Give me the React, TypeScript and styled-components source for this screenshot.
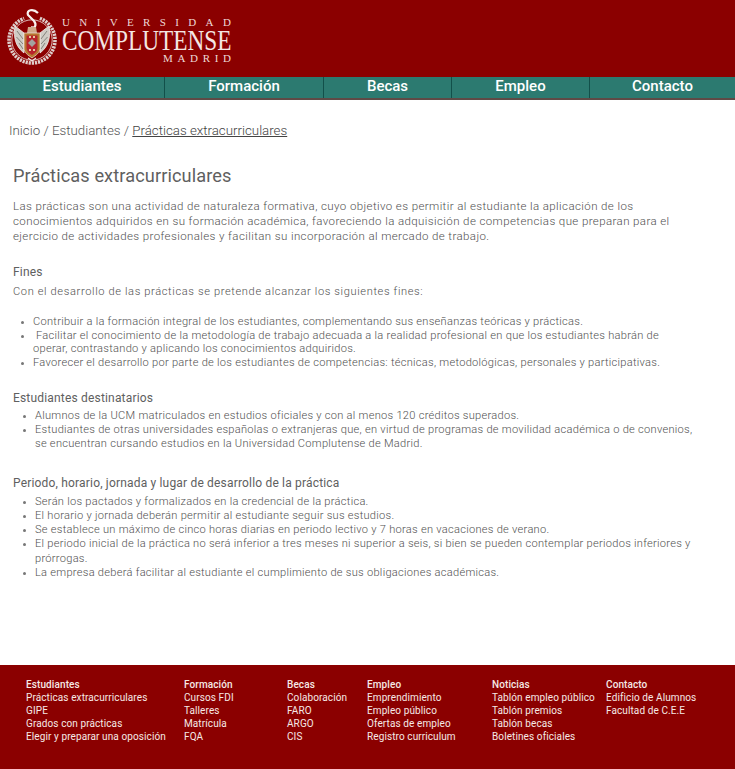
import * as React from 'react';
import styled, {createGlobalStyle} from 'styled-components';

const GlobalStyle = createGlobalStyle`
  html, body {
    margin: 0;
    padding: 0;
    background: #fff;
    font-family: Roboto, "Liberation Sans", sans-serif;
  }
`;

const Page = styled.div`
  width: 735px;
  height: 769px;
  overflow: hidden;
  display: flex;
  flex-direction: column;
`;

const Header = styled.header`
  height: 77px;
  background: #8b0000;
  display: flex;
  align-items: flex-start;
  padding: 8px 0 0 6px;
  box-sizing: border-box;
  gap: 5px;
`;

const Wordmark = styled.div`
  display: flex;
  flex-direction: column;
  font-family: "Liberation Serif", serif;
  color: #eed9d6;
  width: 169px;
  margin-left: -1px;
`;

const WordSmall = styled.div`
  display: flex;
  justify-content: space-between;
  font-size: 11px;
  line-height: 12px;
  margin-top: 8px;
`;

const WordBig = styled.div`
  font-size: 29px;
  line-height: 24px;
  white-space: nowrap;
  color: #f4e6e3;
  transform: scaleX(0.803);
  transform-origin: left center;
`;

const WordTail = styled(WordSmall)`
  margin: 0 0 0 101px;
`;

const Nav = styled.nav`
  height: 21px;
  background: #2c7a70;
  border-bottom: 2px solid #5f4a46;
  display: flex;
`;

const NavItem = styled.a<{$w: number}>`
  width: ${p => p.$w}px;
  box-sizing: border-box;
  border-right: 1px solid #12504a;
  color: #fff;
  font-size: 15px;
  font-weight: 500;
  line-height: 19px;
  text-align: center;
  &:last-child { border-right: 0; }
`;

const Crumbs = styled.div`
  margin-top: 22px;
  padding-left: 9px;
  font-size: 13.3px;
  line-height: 18px;
  font-weight: 300;
  color: #555;
  u { color: #444; }
`;

const Main = styled.main`
  flex: 1;
  padding: 0 13px;
  color: #505050;
  font-size: 11.1px;
  font-weight: 300;
`;

const Title = styled.h1`
  margin: 24px 0 0;
  font-size: 18.2px;
  line-height: 24px;
  font-weight: 400;
  letter-spacing: 0.1px;
  color: #5f5f5f;
`;

const Para = styled.p`
  margin: 11px 0 0;
  font-size: 11.5px;
  line-height: 15px;
  letter-spacing: 0.4px;
  width: 668px;
`;

const Heading = styled.h2<{$top: number}>`
  margin: ${p => p.$top}px 0 0;
  font-size: 12px;
  line-height: 16px;
  font-weight: 400;
  letter-spacing: 0.18px;
  color: #606060;
`;

const Lead = styled.p`
  margin: 4px 0 0;
  line-height: 16px;
  letter-spacing: 0.63px;
`;

const List = styled.ul<{$top: number; $line: number; $indent: number; $width: number}>`
  margin: ${p => p.$top}px 0 0;
  padding: 0 0 0 ${p => p.$indent}px;
  width: ${p => p.$width}px;
  box-sizing: border-box;
  line-height: ${p => p.$line}px;
  letter-spacing: 0.27px;
  li::marker { color: #777; font-size: 9px; }
`;

const Footer = styled.footer`
  height: 104px;
  background: #8b0000;
  padding: 13px 0 0 26px;
  box-sizing: border-box;
  display: flex;
  color: #f6e9e6;
  font-size: 10px;
  line-height: 13px;
  letter-spacing: 0.1px;
`;

const FootCol = styled.div<{$w: number}>`
  width: ${p => p.$w}px;
  display: flex;
  flex-direction: column;
  white-space: nowrap;
  b { font-weight: 500; }
`;

const Crest = () => (
  <svg width="52" height="60" viewBox="0 0 52 60" aria-hidden="true">
    <path d="M33.9 10.4 A23 23 0 1 1 18.1 10.4" fill="none" stroke="#dfcfcc" strokeWidth="3.6" strokeDasharray="2.2 0.9" />
    <circle cx="26" cy="32" r="20.2" fill="#8b0000" stroke="#f1e4e1" strokeWidth="0.8" />
    <g transform="translate(1 1)">
      <path d="M17 24 L8 17 C6 29 9 38 17 44 Z" fill="#cfccc5" stroke="#f4ecea" strokeWidth="0.8" />
      <path d="M33 24 L42 17 C44 29 41 38 33 44 Z" fill="#cfccc5" stroke="#f4ecea" strokeWidth="0.8" />
      <path d="M10 22 L16 30 M9.5 28 L16 35 M12 34 L16 40 M40 22 L34 30 M40.5 28 L34 35 M38 34 L34 40" stroke="#7d7b75" strokeWidth="0.9" />
      <path d="M31 4 C26 -1 19 1 21 6 L27 12 C30 16 28 20 24 18" fill="none" stroke="#f8f1ef" strokeWidth="2.2" />
      <path d="M21 18 H29 L30 24 H20 Z" fill="#d0a98a" />
      <path d="M17 24 H33 V39 C33 44 29 46 25 49 C21 46 17 44 17 39 Z" fill="#b7762f" stroke="#efe2dc" strokeWidth="0.7" />
      <path d="M19.5 26.5 H30.5 V39 C30.5 42 28 44 25 46 C22 44 19.5 42 19.5 39 Z" fill="#b8222b" />
      <path d="M25 30 L29 34 L25 38 L21 34 Z" fill="#a3a3a0" />
      <path d="M22 27 h2 v2 h-2 Z M26 27 h2 v2 h-2 Z M22 40 h2 v2 h-2 Z M26 40 h2 v2 h-2 Z" fill="#e9c9a2" />
      <path d="M21 49 L25 52 L29 49" fill="none" stroke="#f1e4e1" strokeWidth="1.2" />
    </g>
  </svg>
);

const navItems: [string, number][] = [
  ['Estudiantes', 165], ['Formación', 159], ['Becas', 128], ['Empleo', 138], ['Contacto', 145],
];

const footer: {title: string; w: number; links: string[]}[] = [
  {title: 'Estudiantes', w: 158, links: ['Prácticas extracurriculares', 'GIPE', 'Grados con prácticas', 'Elegir y preparar una oposición']},
  {title: 'Formación', w: 103, links: ['Cursos FDI', 'Talleres', 'Matrícula', 'FQA']},
  {title: 'Becas', w: 80, links: ['Colaboración', 'FARO', 'ARGO', 'CIS']},
  {title: 'Empleo', w: 125, links: ['Emprendimiento', 'Empleo público', 'Ofertas de empleo', 'Registro curriculum']},
  {title: 'Noticias', w: 114, links: ['Tablón empleo público', 'Tablón premios', 'Tablón becas', 'Boletines oficiales']},
  {title: 'Contacto', w: 100, links: ['Edificio de Alumnos', 'Facultad de C.E.E']},
];

export default function App() {
  return (
    <Page>
      <GlobalStyle />
      <Header>
        <Crest />
        <Wordmark>
          <WordSmall>{'UNIVERSIDAD'.split('').map((c, i) => <span key={i}>{c}</span>)}</WordSmall>
          <WordBig>COMPLUTENSE</WordBig>
          <WordTail>{'MADRID'.split('').map((c, i) => <span key={i}>{c}</span>)}</WordTail>
        </Wordmark>
      </Header>
      <Nav>
        {navItems.map(([label, w]) => <NavItem key={label} $w={w}>{label}</NavItem>)}
      </Nav>
      <Crumbs>Inicio / Estudiantes / <u>Prácticas extracurriculares</u></Crumbs>
      <Main>
        <Title>Prácticas extracurriculares</Title>
        <Para>
          Las prácticas son una actividad de naturaleza formativa, cuyo objetivo es permitir al estudiante la aplicación de los conocimientos adquiridos en su formación académica, favoreciendo la adquisición de competencias que preparan para el ejercicio de actividades profesionales y facilitan su incorporación al mercado de trabajo.
        </Para>
        <Heading $top={20}>Fines</Heading>
        <Lead>Con el desarrollo de las prácticas se pretende alcanzar los siguientes fines:</Lead>
        <List $top={15} $line={13.7} $indent={20} $width={665}>
          <li>Contribuir a la formación integral de los estudiantes, complementando sus enseñanzas teóricas y prácticas.</li>
          <li>&nbsp;Facilitar el conocimiento de la metodología de trabajo adecuada a la realidad profesional en que los estudiantes habrán de operar, contrastando y aplicando los conocimientos adquiridos.</li>
          <li>Favorecer el desarrollo por parte de los estudiantes de competencias: técnicas, metodológicas, personales y participativas.</li>
        </List>
        <Heading $top={20}>Estudiantes destinatarios</Heading>
        <List $top={3} $line={14} $indent={22} $width={687}>
          <li>Alumnos de la UCM matriculados en estudios oficiales y con al menos 120 créditos superados.</li>
          <li>Estudiantes de otras universidades españolas o extranjeras que, en virtud de programas de movilidad académica o de convenios, se encuentran cursando estudios en la Universidad Complutense de Madrid.</li>
        </List>
        <Heading $top={24}>Periodo, horario, jornada y lugar de desarrollo de la práctica</Heading>
        <List $top={4} $line={14.2} $indent={22} $width={690}>
          <li>Serán los pactados y formalizados en la credencial de la práctica.</li>
          <li>El horario y jornada deberán permitir al estudiante seguir sus estudios.</li>
          <li>Se establece un máximo de cinco horas diarias en periodo lectivo y 7 horas en vacaciones de verano.</li>
          <li>El periodo inicial de la práctica no será inferior a tres meses ni superior a seis, si bien se pueden contemplar periodos inferiores y prórrogas.</li>
          <li>La empresa deberá facilitar al estudiante el cumplimiento de sus obligaciones académicas.</li>
        </List>
      </Main>
      <Footer>
        {footer.map(col => (
          <FootCol key={col.title} $w={col.w}>
            <b>{col.title}</b>
            {col.links.map(l => <span key={l}>{l}</span>)}
          </FootCol>
        ))}
      </Footer>
    </Page>
  );
}
